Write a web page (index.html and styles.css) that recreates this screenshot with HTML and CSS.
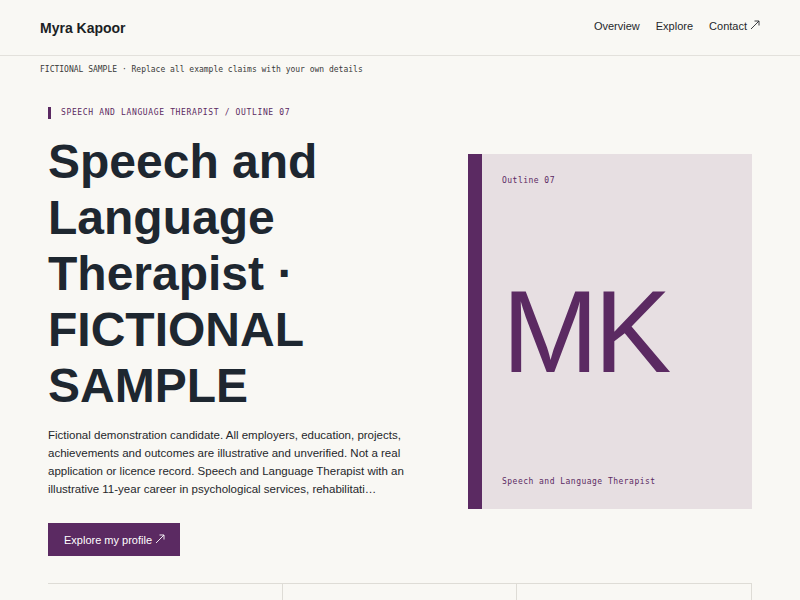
FILE: index.html
```html
<!DOCTYPE html>
<html lang="en">
<head>
<meta charset="utf-8">
<title>Myra Kapoor — Speech and Language Therapist</title>
<link rel="stylesheet" href="styles.css">
</head>
<body>
<header class="site-header">
  <a class="logo" href="#">Myra Kapoor</a>
  <nav class="nav">
    <a href="#">Overview</a>
    <a href="#">Explore</a>
    <a href="#" class="ext">Contact <svg class="arrow" viewBox="0 0 10 10" width="10" height="10" aria-hidden="true"><path d="M1 9 L9 1 M4.5 1 H9 V5.5" fill="none" stroke="currentColor" stroke-width="0.9"/></svg></a>
  </nav>
</header>
<div class="notice">FICTIONAL SAMPLE · Replace all example claims with your own details</div>
<main class="page">
  <section class="hero">
    <div class="hero-copy">
      <p class="eyebrow">SPEECH AND LANGUAGE THERAPIST / OUTLINE 07</p>
      <h1 class="title">Speech and Language Therapist · FICTIONAL SAMPLE</h1>
      <p class="lead">Fictional demonstration candidate. All employers, education, projects, achievements and outcomes are illustrative and unverified. Not a real application or licence record. Speech and Language Therapist with an illustrative 11-year career in psychological services, rehabilitati…</p>
      <a class="btn" href="#">Explore my profile <svg class="arrow" viewBox="0 0 10 10" width="10" height="10" aria-hidden="true"><path d="M1 9 L9 1 M4.5 1 H9 V5.5" fill="none" stroke="currentColor" stroke-width="0.9"/></svg></a>
    </div>
    <aside class="card">
      <span class="card-label">Outline 07</span>
      <span class="monogram">MK</span>
      <span class="card-label">Speech and Language Therapist</span>
    </aside>
  </section>
  <section class="stats">
    <div class="stat"></div>
    <div class="stat"></div>
    <div class="stat"></div>
  </section>
</main>
</body>
</html>
```
FILE: styles.css
```css
* { box-sizing: border-box; }
html, body { margin: 0; padding: 0; }
body {
  background: #f9f8f4;
  color: #222428;
  font-family: "Liberation Sans", Arial, sans-serif;
}
a { color: inherit; text-decoration: none; }

.site-header {
  height: 56px;
  padding: 0 40px;
  display: flex;
  align-items: center;
  justify-content: space-between;
  border-bottom: 1px solid #e3e1dc;
}
.logo {
  font-size: 14px;
  font-weight: 700;
  color: #1c1f24;
}
.nav {
  display: flex;
  align-items: center;
  gap: 16px;
  margin-bottom: 4px;
  font-size: 11px;
  color: #26282c;
}
.ext, .btn { display: inline-flex; align-items: center; gap: 3px; }
.arrow { display: block; width: 10px; height: 10px; margin-top: -2px; }

.notice {
  padding: 8px 40px 6px;
  font-family: "DejaVu Sans Mono", monospace;
  font-size: 8px;
  line-height: 12px;
  color: #3a3a3a;
}

.page {
  max-width: 704px;
  margin: 0 auto;
}
.hero {
  display: grid;
  grid-template-columns: 372px 284px;
  gap: 48px;
  align-items: center;
  padding: 25px 0 27px;
}
.eyebrow {
  margin: 0;
  padding-left: 10px;
  border-left: 3px solid #5b2a62;
  font-family: "DejaVu Sans Mono", monospace;
  font-size: 8px;
  line-height: 12px;
  letter-spacing: 0.08em;
  color: #5b2a62;
}
.title {
  margin: 15px 0 0;
  font-size: 48px;
  line-height: 56px;
  font-weight: 700;
  color: #1e2730;
}
.lead {
  margin: 12px 0 0;
  font-size: 11.5px;
  line-height: 18px;
  color: #25272b;
}
.btn {
  margin-top: 25px;
  height: 33px;
  padding: 0 15px 0 16px;
  background: #5b2a62;
  color: #fff;
  font-size: 11px;
}

.card {
  aspect-ratio: 4 / 5;
  background: #e7dfe2;
  border-left: 14px solid #5b2a62;
  padding: 21px 20px;
  display: flex;
  flex-direction: column;
  justify-content: space-between;
  align-items: flex-start;
}
.card-label {
  font-family: "DejaVu Sans Mono", monospace;
  font-size: 8px;
  line-height: 12px;
  letter-spacing: 0.06em;
  color: #5b2a62;
}
.monogram {
  font-size: 116px;
  line-height: 1;
  letter-spacing: -0.04em;
  color: #5b2a62;
}

.stats {
  display: grid;
  grid-template-columns: repeat(3, 1fr);
  border-top: 1px solid #dedcd6;
}
.stat {
  border-right: 1px solid #dedcd6;
  min-height: 96px;
}
```
